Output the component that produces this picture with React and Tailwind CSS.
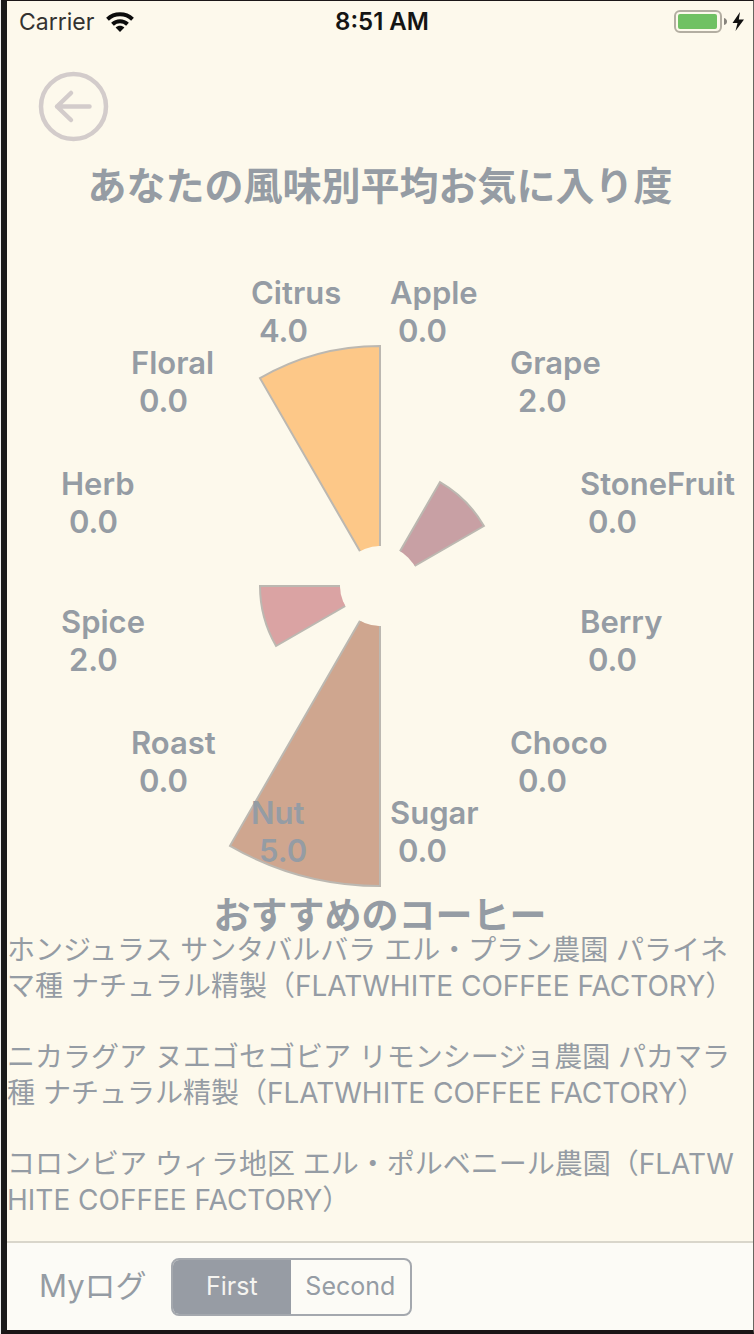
const CENTER_X = 373;
const CENTER_Y = 377;
const HOLE = 40;
const STEP = 60;

const flavors = [
  { name: "Apple", score: 0, x: 383, y: 95 },
  { name: "Grape", score: 2, x: 503, y: 165, fill: "#c8a0a4" },
  { name: "StoneFruit", score: 0, x: 573, y: 286 },
  { name: "Berry", score: 0, x: 573, y: 424 },
  { name: "Choco", score: 0, x: 503, y: 545 },
  { name: "Sugar", score: 0, x: 383, y: 615 },
  { name: "Nut", score: 5, x: 244, y: 615, fill: "#cfa68f" },
  { name: "Roast", score: 0, x: 124, y: 545 },
  { name: "Spice", score: 2, x: 54, y: 424, fill: "#daa3a3" },
  { name: "Herb", score: 0, x: 54, y: 286 },
  { name: "Floral", score: 0, x: 124, y: 165 },
  { name: "Citrus", score: 4, x: 244, y: 95, fill: "#fdc888" },
];

const coffees = [
  ["ホンジュラス サンタバルバラ エル・プラン農園 パライネ", "マ種 ナチュラル精製（FLATWHITE COFFEE FACTORY）"],
  ["ニカラグア ヌエゴセゴビア リモンシージョ農園 パカマラ", "種 ナチュラル精製（FLATWHITE COFFEE FACTORY）"],
  ["コロンビア ウィラ地区 エル・ポルベニール農園（FLATW", "HITE COFFEE FACTORY）"],
];

function point(radius, slot) {
  const angle = (slot * Math.PI) / 6;
  return `${(CENTER_X + radius * Math.sin(angle)).toFixed(2)} ${(CENTER_Y - radius * Math.cos(angle)).toFixed(2)}`;
}

function wedge(slot, score) {
  const r = score * STEP;
  return `M${point(HOLE, slot)}L${point(r, slot)}A${r} ${r} 0 0 1 ${point(r, slot + 1)}L${point(HOLE, slot + 1)}`;
}

function StatusBar() {
  return (
    <header className="grid h-[42px] grid-cols-3 items-center pr-2 pl-3 text-[23px] text-[#333230]">
      <div className="flex items-center gap-3">
        <span>Carrier</span>
        <svg className="h-5 w-7" viewBox="0 0 28 20" aria-label="Wi-Fi">
          <g fill="none" stroke="#0c0c0c" strokeWidth="4">
            <path d="M1.5 7.2C8.5 .6 19.500 .6 26.500 7.200" />
            <path d="M6.500 12.300C10.800 8.300 17.200 8.300 21.500 12.300" />
          </g>
          <path d="M14 20L9.600 15.500C12 13.300 16 13.300 18.400 15.500Z" fill="#0c0c0c" />
        </svg>
      </div>
      <span className="text-center text-[24px] font-semibold text-[#151514]">8:51 AM</span>
      <svg className="h-6 w-[72px] justify-self-end" viewBox="0 0 72 24" aria-label="Battery charging">
        <rect x="2" y="1" width="46" height="21" rx="5" fill="none" stroke="#b3aea2" strokeWidth="2" />
        <rect x="5" y="4" width="39" height="15" rx="2" fill="#70c163" />
        <path d="M51 8Q54 9 54 11.500T51 15Z" fill="#87847d" />
        <path d="M67 2L59.500 13H64.500L62.500 21L71 9.500H65.800Z" fill="#111" />
      </svg>
    </header>
  );
}

function FlavorChart() {
  return (
    <svg className="w-full" viewBox="0 0 746 691" role="img" aria-label="風味別平均お気に入り度">
      {flavors.map(({ name, score, fill }, i) =>
        score > 0 ? <path key={name} d={wedge(i, score)} fill={fill} stroke="#bcb8b1" strokeWidth="2" /> : null
      )}
      <circle cx={CENTER_X} cy={CENTER_Y} r={HOLE} fill="#fdf9ec" />
      <g className="fill-[#959ca4] text-[31px] font-semibold">
        {flavors.map(({ name, score, x, y }) => (
          <g key={name}>
            <text x={x} y={y}>{name}</text>
            <text x={x + 8} y={y + 38}>{score.toFixed(1)}</text>
          </g>
        ))}
      </g>
    </svg>
  );
}

export default function App() {
  return (
    <div className="min-h-screen border-l border-[#eeeeee] font-['Inter','Noto_Sans_CJK_JP',sans-serif] text-[#959ca4]">
      <div className="flex min-h-screen flex-col border-t border-r border-b-4 border-l-6 border-t-[#1c1718] border-r-[#686560] border-b-[#1a1516] border-l-[#1a1a1a] bg-[#fdf9ec]">
        <StatusBar />
        <main className="flex flex-1 flex-col">
          <button type="button" aria-label="戻る" className="mt-7 ml-[31px] size-[71px] text-[#d3cccb]">
            <svg viewBox="0 0 71 71" fill="none" stroke="currentColor" strokeWidth="4.500" strokeLinecap="round" strokeLinejoin="round">
              <circle cx="35.500" cy="35.500" r="32.500" />
              <path d="M51.500 35.500H19M33 22L19 35.500L33 49" />
            </svg>
          </button>
          <h1 className="mt-5 text-center text-[39px] leading-[47px] font-bold">あなたの風味別平均お気に入り度</h1>
          <FlavorChart />
          <h2 className="text-center text-[37px] leading-8 font-bold">おすすめのコーヒー</h2>
          <div className="flex flex-col gap-[35px] text-[28px] leading-9 whitespace-nowrap">
            {coffees.map(([first, second]) => (
              <p key={first}>
                {first}
                <br />
                {second}
              </p>
            ))}
          </div>
        </main>
        <footer className="flex h-[89px] items-center gap-6 border-t-2 border-[#d9d6cb] bg-[#fcfbf6] pl-8">
          <span className="text-[31px]">Myログ</span>
          <div className="flex h-[58px] w-[241px] overflow-hidden rounded-lg border-2 border-[#a4a8ae] text-[25px]">
            <button type="button" aria-pressed="true" className="flex-1 bg-[#979ca4] text-[#f5f4f0]">First</button>
            <button type="button" aria-pressed="false" className="flex-1">Second</button>
          </div>
        </footer>
      </div>
    </div>
  );
}
